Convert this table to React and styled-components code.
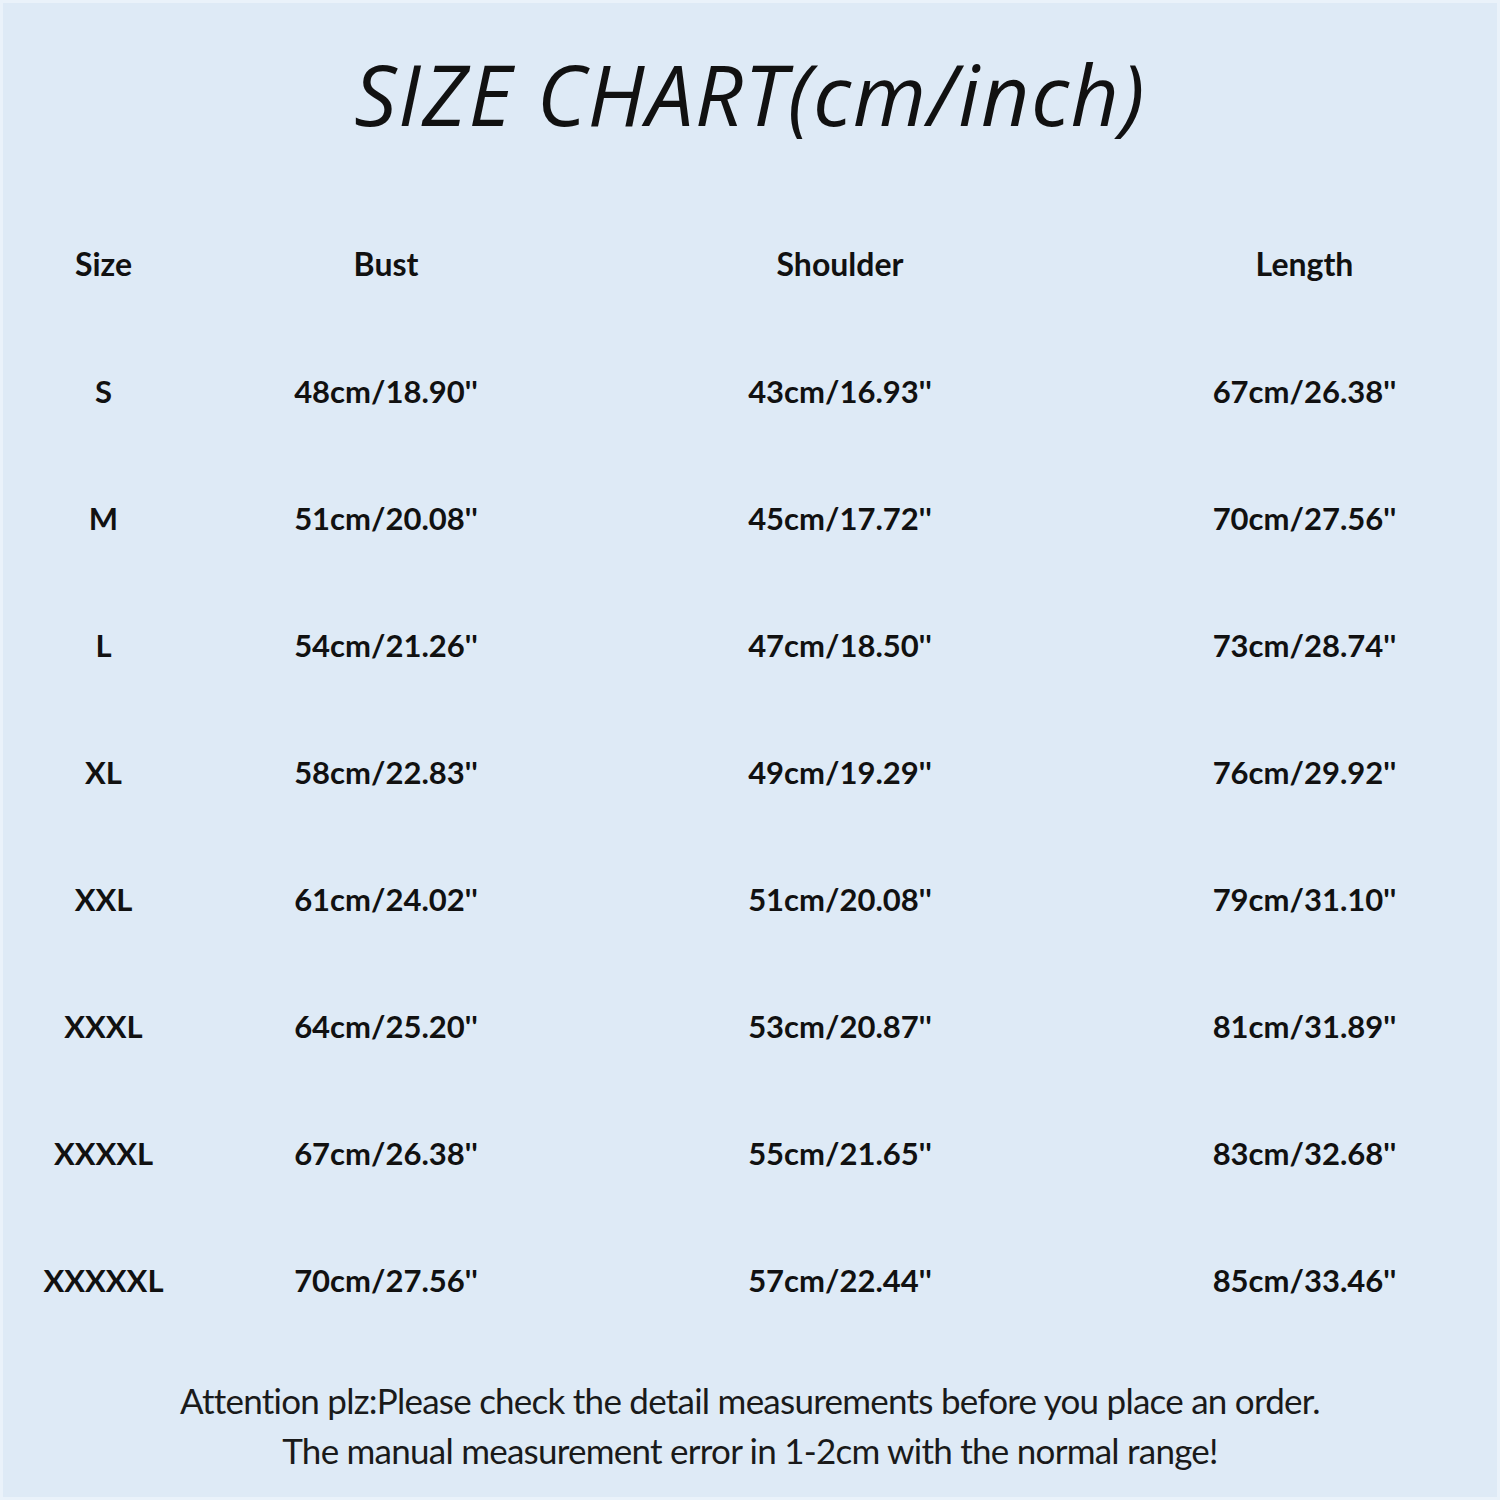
import styled, { createGlobalStyle } from "styled-components";

const GlobalStyle = createGlobalStyle`
  html, body {
    margin: 0;
    padding: 0;
    background: #deeaf6;
  }
`;

const rows = [
  ["S", "48cm/18.90''", "43cm/16.93''", "67cm/26.38''"],
  ["M", "51cm/20.08''", "45cm/17.72''", "70cm/27.56''"],
  ["L", "54cm/21.26''", "47cm/18.50''", "73cm/28.74''"],
  ["XL", "58cm/22.83''", "49cm/19.29''", "76cm/29.92''"],
  ["XXL", "61cm/24.02''", "51cm/20.08''", "79cm/31.10''"],
  ["XXXL", "64cm/25.20''", "53cm/20.87''", "81cm/31.89''"],
  ["XXXXL", "67cm/26.38''", "55cm/21.65''", "83cm/32.68''"],
  ["XXXXXL", "70cm/27.56''", "57cm/22.44''", "85cm/33.46''"]
];

const Page = styled.div`
  box-sizing: border-box;
  width: 1500px;
  height: 1500px;
  background: #deeaf6;
  border: 3px solid #eaf2fa;
  display: flex;
  flex-direction: column;
  color: #111;
  overflow: hidden;
`;

const Header = styled.div`
  height: 197px;
  display: flex;
  align-items: center;
  justify-content: center;
`;

const Title = styled.h1`
  margin: 0;
  padding-bottom: 16px;
  font-family: "Open Sans", "DejaVu Sans", sans-serif;
  font-style: italic;
  font-weight: 400;
  font-size: 84px;
  letter-spacing: 1.5px;
  line-height: 1;
`;

const Table = styled.div`
  display: grid;
  grid-template-columns: 201px 364px 544px 385px;
  grid-auto-rows: 127px;
`;

const Cell = styled.div`
  display: flex;
  align-items: center;
  justify-content: center;
  font-family: Lato, "Noto Sans", sans-serif;
  font-weight: 700;
  font-size: ${p => (p.head ? "32px" : "31px")};
  color: #111;
`;

const Note = styled.div`
  padding-top: 32px;
  display: flex;
  flex-direction: column;
  align-items: center;
  font-family: Lato, "Noto Sans", sans-serif;
  font-weight: 400;
  font-size: 35px;
  line-height: 50px;
  letter-spacing: -0.75px;
  color: #1a1a1a;
`;

const NoteLine = styled.div`
  white-space: nowrap;
`;

export default function App() {
  return (
    <>
      <GlobalStyle />
      <Page>
        <Header>
          <Title>SIZE CHART(cm/inch)</Title>
        </Header>
        <Table>
          <Cell head>Size</Cell>
          <Cell head>Bust</Cell>
          <Cell head>Shoulder</Cell>
          <Cell head>Length</Cell>
          {rows.map(r =>
            r.map((v, i) => <Cell key={r[0] + i}>{v}</Cell>)
          )}
        </Table>
        <Note>
          <NoteLine>
            Attention plz:Please check the detail measurements before you place an order.
          </NoteLine>
          <NoteLine>The manual measurement error in 1-2cm with the normal range!</NoteLine>
        </Note>
      </Page>
    </>
  );
}
